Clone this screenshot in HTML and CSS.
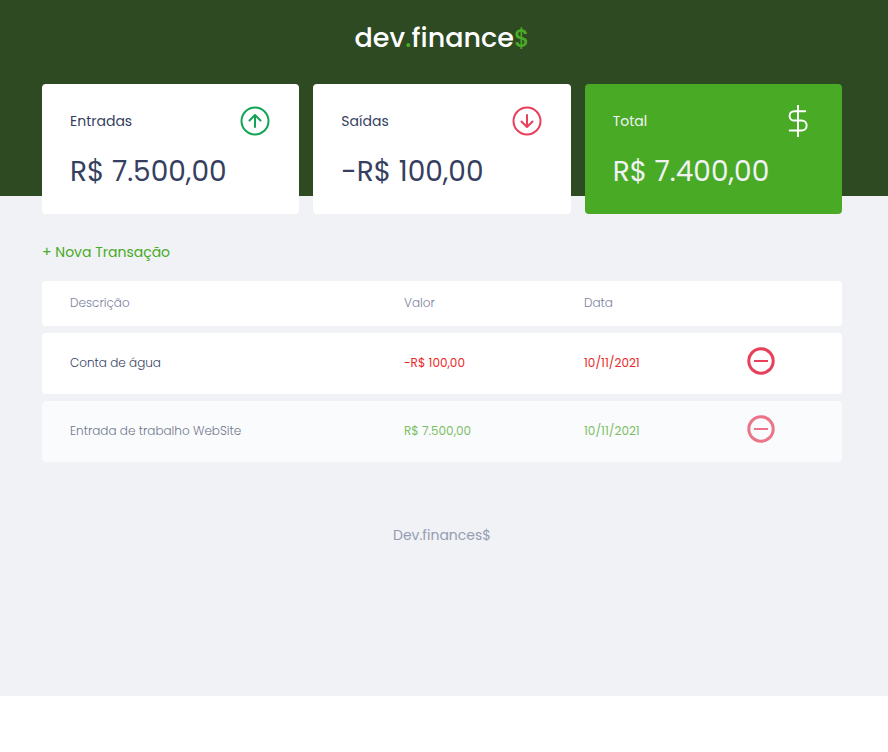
FILE: index.html
```html
<!DOCTYPE html>
<html lang="pt-br">
<head>
<meta charset="utf-8">
<meta name="viewport" content="width=device-width, initial-scale=1">
<title>dev.finance$</title>
<link rel="stylesheet" href="styles.css">
</head>
<body>
<div class="page">
  <header class="header">
    <h1 class="logo">dev<span class="logo-accent">.</span>finance<span class="logo-accent logo-sign">$</span></h1>
  </header>
  <main class="container">
    <section class="balance">
      <div class="card">
        <h3 class="card-head"><span>Entradas</span>
          <svg class="card-icon income" viewBox="0 0 32 32" aria-hidden="true"><circle cx="16" cy="16" r="13.5"/><path d="M16 22V10.5M10.5 15.5L16 10l5.500 5.500"/></svg>
        </h3>
        <p class="amount">R$ 7.500,00</p>
      </div>
      <div class="card">
        <h3 class="card-head"><span>Saídas</span>
          <svg class="card-icon expense" viewBox="0 0 32 32" aria-hidden="true"><circle cx="16" cy="16" r="13.5"/><path d="M16 10v11.500M10.500 16.500L16 22l5.500-5.500"/></svg>
        </h3>
        <p class="amount">-R$ 100,00</p>
      </div>
      <div class="card total">
        <h3 class="card-head"><span>Total</span>
          <svg class="card-icon" viewBox="0 0 32 32" aria-hidden="true"><path d="M16 .8v30.400M23.200 6.200H12.300a4.700 4.700 0 0 0 0 9.400h7.400a4.900 4.900 0 0 1 0 9.900H7.800"/></svg>
        </h3>
        <p class="amount">R$ 7.400,00</p>
      </div>
    </section>
    <section class="transactions">
      <a class="new" href="#">+ Nova Transação</a>
      <table class="table">
        <thead>
          <tr><th class="col-desc">Descrição</th><th class="col-value">Valor</th><th class="col-date">Data</th><th></th></tr>
        </thead>
        <tbody>
          <tr>
            <td class="description">Conta de água</td><td class="negative">-R$ 100,00</td><td class="negative">10/11/2021</td>
            <td><button class="remove" type="button" aria-label="Remover transação"><svg viewBox="0 0 28 28" aria-hidden="true"><circle cx="14" cy="14" r="12.200" stroke-width="3"/><path d="M7 14h14" stroke-width="2"/></svg></button></td>
          </tr>
          <tr>
            <td class="description">Entrada de trabalho WebSite</td><td class="positive">R$ 7.500,00</td><td class="positive">10/11/2021</td>
            <td><button class="remove" type="button" aria-label="Remover transação"><svg viewBox="0 0 28 28" aria-hidden="true"><circle cx="14" cy="14" r="12.200" stroke-width="3"/><path d="M7 14h14" stroke-width="2"/></svg></button></td>
          </tr>
        </tbody>
      </table>
    </section>
  </main>
  <footer class="footer">Dev.finances$</footer>
</div>
</body>
</html>
```
FILE: styles.css
```css
* {
  box-sizing: border-box;
  margin: 0;
  padding: 0;
}

html {
  background: #fff;
}

body {
  font-family: Poppins, Inter, "Open Sans", sans-serif;
  font-size: 14px;
  line-height: 21px;
}

.page {
  background: #f0f2f5;
  padding-bottom: 150px;
}

.header {
  background: #2d4a22;
  padding: 17px 4px 137px 0;
  text-align: center;
}

.logo {
  color: #fff;
  font-size: 27px;
  font-weight: 500;
  line-height: 42px;
}

.logo-accent {
  color: #49aa26;
}

.logo-sign {
  font-size: 24px;
  line-height: 24px;
}

/* The right padding balances the offset header and footer text */
.container {
  width: 100%;
  max-width: 888px;
  margin: -112px auto 0;
  padding: 0 46px 0 42px;
}

.balance {
  display: grid;
  grid-template-columns: repeat(3, 1fr);
  gap: 14px;
}

.card {
  background: #fff;
  border-radius: 4px;
  padding: 21px 28px;
  color: #363f5f;
}

.card-head {
  display: flex;
  align-items: center;
  justify-content: space-between;
  font-size: 14px;
  font-weight: 400;
}

.card-icon {
  width: 32px;
  height: 32px;
  fill: none;
  stroke: #fff;
  stroke-width: 2;
  stroke-linecap: round;
  stroke-linejoin: round;
}

.income {
  stroke: #12a454;
}

.expense {
  stroke: #e83f5b;
}

.amount {
  margin-top: 14px;
  font-size: 28px;
  line-height: 42px;
}

.total {
  background: #49aa26;
  color: #f0f2f5;
}

.transactions {
  margin-top: 28px;
}

.new {
  display: block;
  width: fit-content;
  margin-bottom: 11px;
  color: #49aa26;
  text-decoration: none;
}

.table {
  width: 100%;
  table-layout: fixed;
  border-spacing: 0 7px;
  font-size: 12px;
  line-height: 17px;
}

.col-desc {
  width: 41.75%;
}

.col-value {
  width: 22.5%;
}

.col-date {
  width: 20.375%;
}

th,
td {
  background: #fff;
  padding: 13px 28px 15px;
  text-align: left;
  font-weight: 400;
}

th {
  color: #7c82a0;
  font-weight: 300;
}

th:first-child,
td:first-child {
  border-radius: 4px 0 0 4px;
}

th:last-child,
td:last-child {
  border-radius: 0 4px 4px 0;
}

tbody tr:nth-child(even) {
  opacity: 0.7;
}

.description {
  color: #363f5f;
  font-weight: 300;
}

.negative {
  color: #e92929;
}

.positive {
  color: #49aa26;
}

.remove {
  display: block;
  margin: 1px 0 4px;
  border: 0;
  background: none;
  cursor: pointer;
}

.remove svg {
  display: block;
  width: 28px;
  height: 28px;
  fill: none;
  stroke: #e83f5b;
}

.footer {
  padding: 56px 4px 0 0;
  text-align: center;
  color: #969cb3;
}
```
